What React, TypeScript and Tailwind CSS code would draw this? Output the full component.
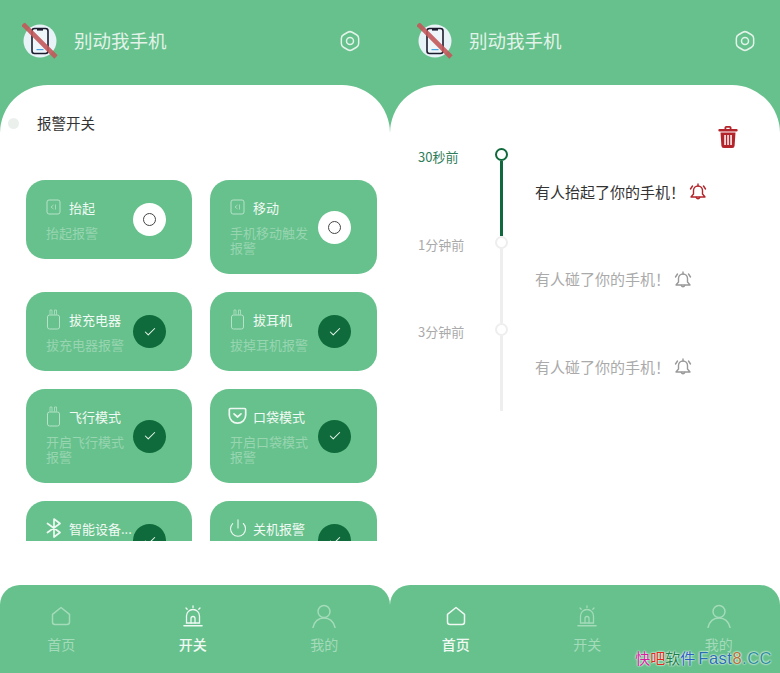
import { Check, Power } from 'lucide-react';

const GREEN = 'bg-[#66c18c]';

function Logo() {
    return (
        <svg width="36" height="36" viewBox="0 0 36 36" className="shrink-0">
            <circle cx="18" cy="18" r="16.5" fill="#e8f3f8" />
            <rect x="10" y="5.5" width="16" height="25" rx="2.5" fill="#eef6fa" stroke="#1c1c2e" strokeWidth="1.6" />
            <rect x="15" y="6" width="6" height="1.6" fill="#1c1c2e" />
            <rect x="14.500" y="26" width="7" height="1.2" fill="#4aa3df" />
            <path d="M1 1 L34 34" stroke="#c4585a" strokeWidth="4.6" opacity="0.9" />
        </svg>
    );
}

function Gear() {
    return (
        <svg width="22" height="22" viewBox="0 0 22 22" fill="none" stroke="#e3f3ea" strokeWidth="1.500" strokeLinejoin="round">
            <path d="M8.830 2.250Q11 1 13.170 2.250L17.500 4.750Q19.660 6 19.660 8.500L19.660 13.500Q19.660 16 17.500 17.250L13.170 19.750Q11 21 8.830 19.750L4.500 17.250Q2.340 16 2.340 13.500L2.340 8.500Q2.340 6 4.500 4.750z" />
            <circle cx="11" cy="11" r="3.500" />
        </svg>
    );
}

function SensorIcon() {
    return (
        <svg width="15" height="16" viewBox="0 0 15 16" fill="none" stroke="#b5e2c8" strokeWidth="1">
            <rect x="1" y="1" width="13" height="14" rx="2" />
            <path d="M9.500 5.500v5M7.500 6 5 8l2.500 2" strokeWidth="0.8" />
        </svg>
    );
}

function PlugIcon() {
    return (
        <svg width="16" height="22" viewBox="0 0 16 22" fill="none" stroke="#b5e2c8" strokeWidth="1">
            <rect x="1.500" y="7" width="12" height="14" rx="2" />
            <path d="M4 6.500V2h2v4.500M8.500 6.500V2h2v4.500" strokeWidth="0.8" />
        </svg>
    );
}

function PocketIcon() {
    return (
        <svg width="19" height="18" viewBox="0 0 19 18" fill="none" stroke="#eef8f2" strokeWidth="1.700" strokeLinecap="round" strokeLinejoin="round" className="-ml-[2px] shrink-0">
            <path d="M2.500 1.500h14a1.200 1.200 0 0 1 1.200 1.200V8a8.200 8.200 0 0 1-16.400 0V2.700a1.200 1.200 0 0 1 1.200-1.200z" />
            <path d="M6 6.800l3.500 3.200 3.500-3.200" />
        </svg>
    );
}

function BluetoothIcon() {
    return (
        <svg width="16" height="20" viewBox="0 0 16 20" fill="none" stroke="#eef8f2" strokeWidth="1.700" strokeLinejoin="round" strokeLinecap="round" className="shrink-0">
            <path d="M1.500 5.500 14 14.500 8 19V1l6 4.500L1.500 14.500" />
        </svg>
    );
}

function Bell({ color }: { color: string }) {
    return (
        <svg width="18" height="18" viewBox="0 0 18 18" fill="none" stroke={color} strokeWidth="1.400" strokeLinejoin="round" strokeLinecap="round">
            <path d="M2 14h14l-2.500-3V7.500a4.500 4.500 0 0 0-9 0V11z" />
            <path d="M7.300 14.500a1.800 1.800 0 0 0 3.400 0M9 1v2M1.500 6 3.500 3M16.500 6l-2-3" />
        </svg>
    );
}

function Trash() {
    return (
        <svg width="20" height="22" viewBox="0 0 20 22" fill="#b3242b">
            <path d="M6.500 3V1.800C6.500.8 7.300 0 8.300 0h3.400c1 0 1.800.8 1.800 1.800V3H18.500a1.200 1.200 0 0 1 0 2.400h-17A1.200 1.200 0 0 1 1.500 3zM8.300 1.700V3h3.400V1.700z" />
            <path fillRule="evenodd" d="M2.500 6.500h15l-.9 13.200A2.400 2.400 0 0 1 14.200 22H5.800a2.400 2.400 0 0 1-2.400-2.300zM6.300 9v10h1.500V9zm3 0v10h1.500V9zm3 0v10h1.500V9z" />
        </svg>
    );
}

function HomeIcon({ color }: { color: string }) {
    return (
        <svg width="20" height="20" viewBox="0 0 20 20" fill="none" stroke={color} strokeWidth="1.500" strokeLinejoin="round">
            <path d="M10 1.500 18.500 8.300V16a2.500 2.500 0 0 1-2.500 2.500H4A2.500 2.500 0 0 1 1.500 16V8.300z" />
        </svg>
    );
}

function AlarmIcon({ color }: { color: string }) {
    return (
        <svg width="20" height="22" viewBox="0 0 20 22" fill="none" stroke={color} strokeWidth="1.300" strokeLinecap="round">
            <path d="M3.500 18V11a6.500 6.500 0 0 1 13 0V18z" />
            <path d="M1 20.800h18" strokeWidth="1.600" />
            <path d="M8 18v-4.500a2 2 0 0 1 4 0V18M10 .8v1.700M3 3l1.200 1.300M17 3l-1.200 1.300" />
        </svg>
    );
}

function UserIcon({ color }: { color: string }) {
    return (
        <svg width="24" height="24" viewBox="0 0 24 24" fill="none" stroke={color} strokeWidth="1.500" strokeLinecap="round">
            <circle cx="12" cy="7.500" r="6" />
            <path d="M1 23.500C2.500 17.500 6.500 14 12 14s9.500 3.500 11 9.500" />
        </svg>
    );
}

function Toggle({ on }: { on: boolean }) {
    if (on) {
        return (
            <div className="w-[33px] h-[33px] shrink-0 rounded-full bg-[#0f6b3b] flex items-center justify-center">
                <Check size={14} strokeWidth={1.800} className="text-[#e6f5ec]" />
            </div>
        );
    }
    return (
        <div className="w-[33px] h-[33px] shrink-0 rounded-full bg-white flex items-center justify-center">
            <div className="w-[13px] h-[13px] rounded-full border-[1.5px] border-[#444]" />
        </div>
    );
}

const cards = [
    { icon: <SensorIcon />, title: '抬起', desc: '抬起报警', on: false },
    { icon: <SensorIcon />, title: '移动', desc: '手机移动触发报警', on: false },
    { icon: <PlugIcon />, title: '拔充电器', desc: '拔充电器报警', on: true },
    { icon: <PlugIcon />, title: '拔耳机', desc: '拔掉耳机报警', on: true },
    { icon: <PlugIcon />, title: '飞行模式', desc: '开启飞行模式报警', on: true },
    { icon: <PocketIcon />, title: '口袋模式', desc: '开启口袋模式报警', on: true },
    { icon: <BluetoothIcon />, title: '智能设备...', desc: '智能设备报警', on: true },
    { icon: <Power size={20} strokeWidth={1.300} className="text-[#eef8f2] -ml-[2px] shrink-0" />, title: '关机报警', desc: '关机报警', on: true },
];

function Card({ icon, title, desc, on }: (typeof cards)[number]) {
    return (
        <div className={`${GREEN} rounded-[19px] pl-5 pr-[26px] py-[17px] flex items-center justify-between`}>
            <div className="w-[80px] pb-[2px]">
                <div className="h-5 flex items-center">
                    <div className="w-[23px] shrink-0 flex items-center">{icon}</div>
                    <span className="mt-[2px] text-[13px] text-[#f2faf5] whitespace-nowrap">{title}</span>
                </div>
                <p className="mt-2 text-[13px] leading-[15px] text-[#98d5b1]">{desc}</p>
            </div>
            <Toggle on={on} />
        </div>
    );
}

function Header({ inset }: { inset: string }) {
    return (
        <header className={`h-[85px] pb-[3px] flex items-center ${inset}`}>
            <Logo />
            <h1 className="ml-4 text-[18.500px] text-[#e3f3ea]">别动我手机</h1>
            <div className="ml-auto"><Gear /></div>
        </header>
    );
}

const tabs = ['首页', '开关', '我的'];

function BottomNav({ active, flush }: { active: number; flush: 'justify-start' | 'justify-end' }) {
    return (
        <div className="bg-white">
            <nav className={`${GREEN} h-[88px] rounded-t-[20px] overflow-hidden flex ${flush}`}>
                {tabs.map((t, i) => {
                    const color = i === active ? '#f0f9f4' : '#a4dbbb';
                    return (
                        <div key={t} className="w-[131.500px] shrink-0 flex flex-col items-center pt-[18px]">
                            <div className="h-[26px] flex items-center justify-center">
                                {i === 0 && <HomeIcon color={color} />}
                                {i === 1 && <AlarmIcon color={color} />}
                                {i === 2 && <UserIcon color={color} />}
                            </div>
                            <span className={`mt-[5px] text-sm ${i === active ? 'text-[#f0f9f4] font-medium' : 'text-[#a4dbbb]'}`}>{t}</span>
                        </div>
                    );
                })}
            </nav>
        </div>
    );
}

function SwitchScreen() {
    return (
        <section className={`${GREEN} flex flex-col h-full`}>
            <Header inset="pl-[22px] pr-[29px]" />
            <div className="bg-white rounded-t-[48px] h-[500px] pt-[27px] overflow-hidden">
                <div className="h-[22px] pl-2 flex items-center gap-[18px]">
                    <span className="w-[11px] h-[11px] rounded-full bg-[#ebf0ed]" />
                    <span className="text-[14.500px] text-[#333]">报警开关</span>
                </div>
                <div className="mt-[46px] h-[361px] overflow-hidden pl-[26px] grid grid-cols-[166px_167px] gap-x-[18px] gap-y-[18px] items-start content-start">
                    {cards.map((c) => <Card key={c.title} {...c} />)}
                </div>
            </div>
            <BottomNav active={1} flush="justify-end" />
        </section>
    );
}

const events = [
    { time: '30秒前', msg: '有人抬起了你的手机！', active: true },
    { time: '1分钟前', msg: '有人碰了你的手机！', active: false },
    { time: '3分钟前', msg: '有人碰了你的手机！', active: false },
];

function HistoryScreen() {
    return (
        <section className={`${GREEN} flex flex-col h-full`}>
            <Header inset="pl-[27px] pr-[24px]" />
            <div className="bg-white rounded-t-[48px] h-[500px] pt-[41px]">
                <div className="flex justify-end pr-[42px]"><Trash /></div>
                <div className="pl-7">
                    {events.map((e) => (
                        <div key={e.time} className="flex h-[87.500px]">
                            <div className={`w-[76px] text-[13px] leading-[18px] ${e.active ? 'text-[#2f7d59]' : 'text-[#aaa]'}`}>{e.time}</div>
                            <div className="w-[14px] flex flex-col items-center">
                                <span className={`w-[13px] h-[13px] shrink-0 rounded-full border-[2.500px] ${e.active ? 'border-[#10693c]' : 'border-[#eeeeee]'} bg-white`} />
                                <span className={`w-[3px] flex-1 ${e.active ? 'bg-[#10693c]' : 'bg-[#eeeeee]'}`} />
                            </div>
                            <div className={`ml-[27px] mt-[34px] h-5 flex items-center gap-1 text-[15px] whitespace-nowrap ${e.active ? 'text-[#333]' : 'text-[#aaa]'}`}>
                                <span>{e.msg}</span>
                                <Bell color={e.active ? '#b3242b' : '#999'} />
                            </div>
                        </div>
                    ))}
                </div>
            </div>
            <BottomNav active={0} flush="justify-start" />
        </section>
    );
}

export default function App() {
    return (
        <div className="relative w-[780px] h-[673px] overflow-hidden grid grid-cols-2 font-['Noto_Sans_CJK_SC','Noto_Sans',sans-serif]">
            <SwitchScreen />
            <HistoryScreen />
            {/* watermark */}
            <div className="absolute right-[8px] bottom-[5px] flex items-center text-[15px] leading-5 whitespace-nowrap [text-shadow:0_0_2px_#fff,0_0_2px_#fff]">
                <span className="text-[#d61fa0]">快</span>
                <span className="text-[#e02b20]">吧</span>
                <span className="text-[#1f7f4a]">软</span>
                <span className="text-[#2a5fc0]">件</span>
                <span className="ml-[3px] tracking-[0.5px] text-[16.500px] text-[#2a6fb0] font-['Liberation_Sans',sans-serif]">
                    Fast<span className="text-[#b5713a]">8</span><span className="text-[#2f8f9a]">.CC</span>
                </span>
            </div>
        </div>
    );
}
